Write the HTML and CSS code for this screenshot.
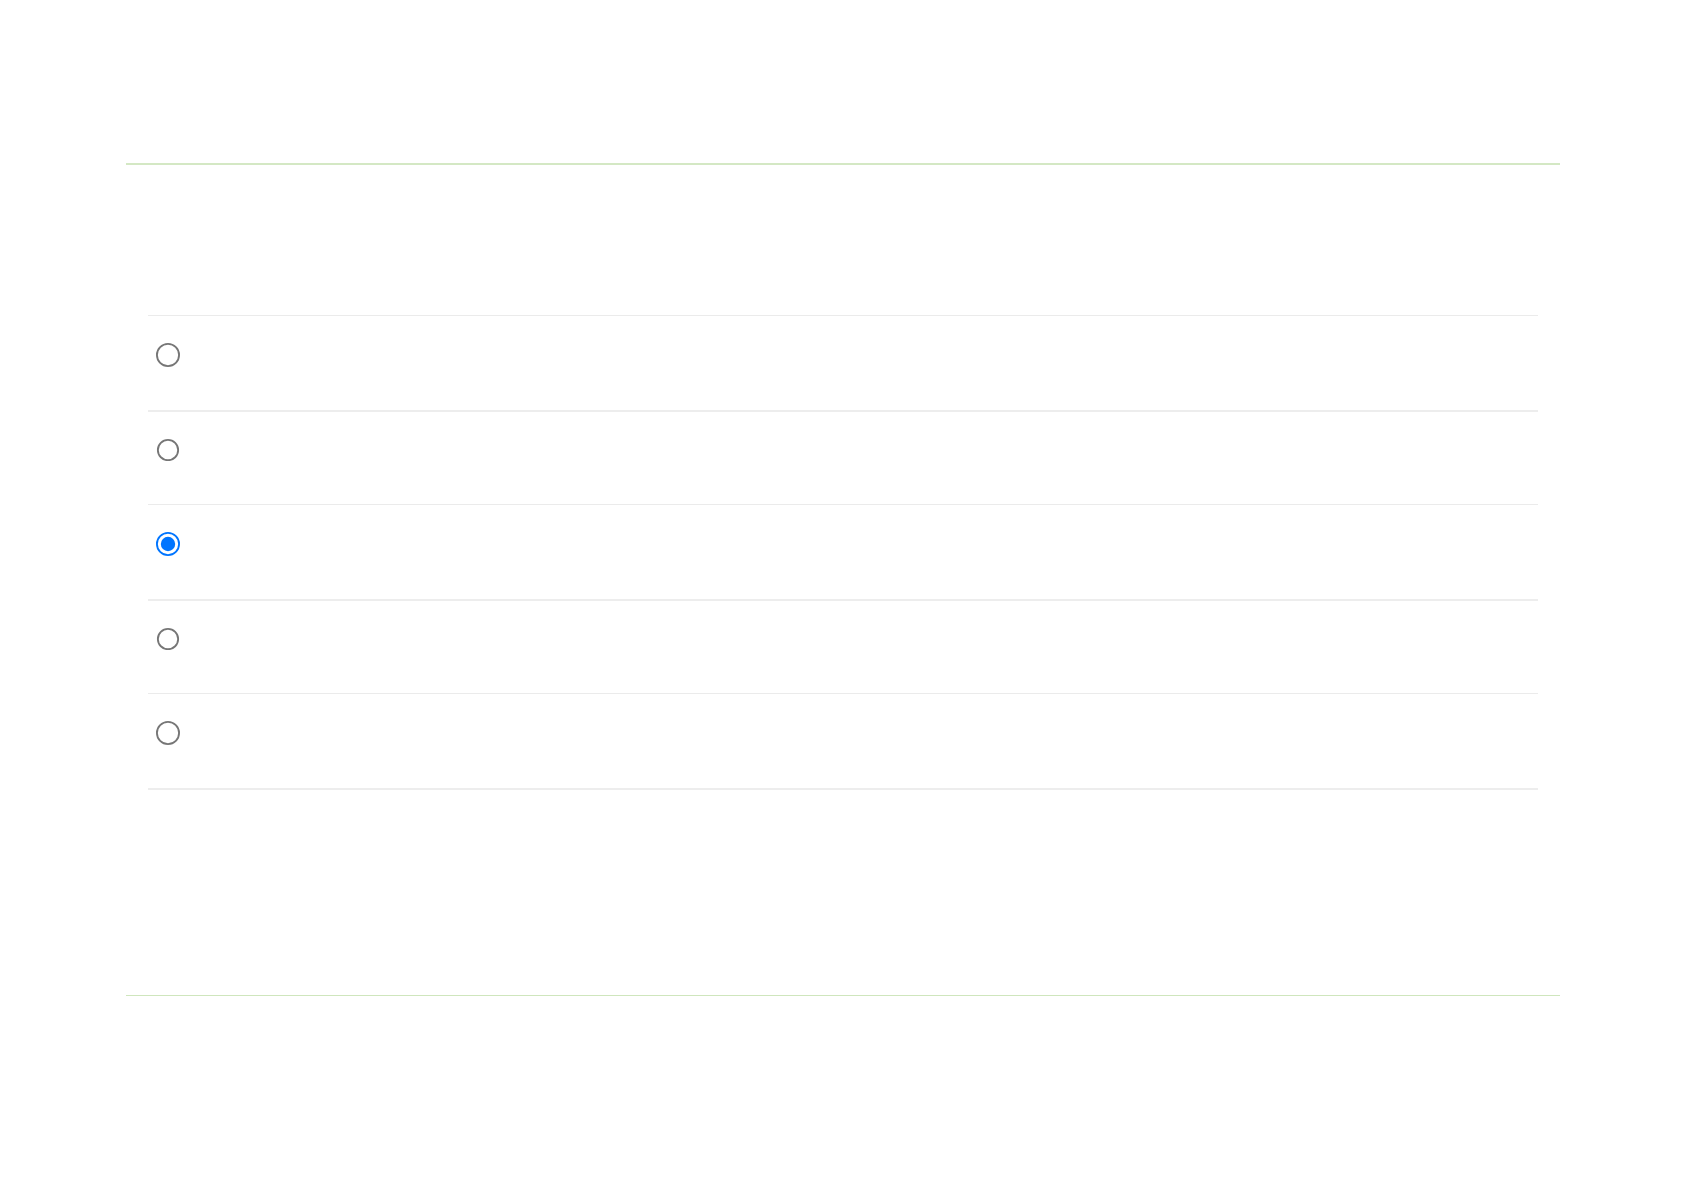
FILE: index.html
```html
<!DOCTYPE html>
<html lang="en">
<head>
<meta charset="utf-8">
<title>Options</title>
<link rel="stylesheet" href="styles.css">
</head>
<body>
<div class="page">
  <section class="panel">
    <ul class="options">
      <li class="option"><input type="radio" name="opt" class="radio"></li>
      <li class="option"><input type="radio" name="opt" class="radio"></li>
      <li class="option"><input type="radio" name="opt" class="radio" checked></li>
      <li class="option"><input type="radio" name="opt" class="radio"></li>
      <li class="option"><input type="radio" name="opt" class="radio"></li>
    </ul>
  </section>
</div>
</body>
</html>
```
FILE: styles.css
```css
html, body {
  margin: 0;
  padding: 0;
  background: #ffffff;
  font-family: "Liberation Sans", Arial, sans-serif;
}

.page {
  padding: 163px 0 0 126px;
}

.panel {
  width: 1434px;
  box-sizing: border-box;
  border-top: 2px solid #d4e8c4;
  border-bottom: 1px solid #cfe6bd;
  padding: 150px 22px 205px 22px;
}

.options {
  list-style: none;
  margin: 0;
  padding: 0;
  border-bottom: 2px solid #ededed;
}

.option {
  height: 94.5px;
  box-sizing: border-box;
  border-top: 1px solid #ebebeb;
  padding: 27px 0 0 8px;
}

.option:nth-child(even) {
  border-top: 2px solid #ededed;
}

.radio {
  display: block;
  width: 13px;
  height: 13px;
  margin: 0;
  zoom: 1.846;
}
```
